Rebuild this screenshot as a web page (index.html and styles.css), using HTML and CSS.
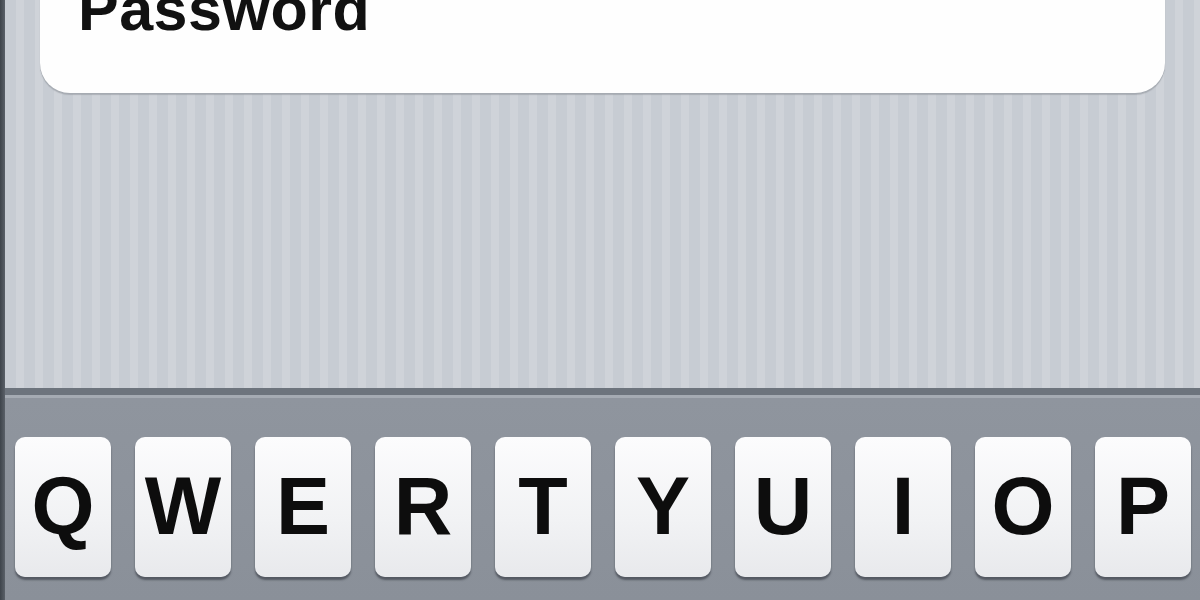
FILE: index.html
```html
<!DOCTYPE html>
<html>
<head>
<meta charset="utf-8">
<link rel="stylesheet" href="styles.css">
</head>
<body>
<div class="screen">
  <div class="edge"></div>
  <div class="main">
    <div class="pane">
      <div class="card">
        <div class="field">Password</div>
      </div>
    </div>
    <div class="keyboard">
      <div class="row">
        <div class="key">Q</div>
        <div class="key">W</div>
        <div class="key">E</div>
        <div class="key">R</div>
        <div class="key">T</div>
        <div class="key">Y</div>
        <div class="key">U</div>
        <div class="key">I</div>
        <div class="key">O</div>
        <div class="key">P</div>
      </div>
    </div>
  </div>
</div>
</body>
</html>
```
FILE: styles.css
```css
html, body {
  margin: 0;
  padding: 0;
  width: 1200px;
  height: 600px;
  overflow: hidden;
  font-family: "Liberation Sans", Arial, sans-serif;
}
.screen {
  display: flex;
  width: 1200px;
  height: 600px;
}
.edge {
  width: 5px;
  background: linear-gradient(90deg, #3e444b, #5a6068);
  flex: none;
}
.main {
  flex: 1;
  display: flex;
  flex-direction: column;
}
.pane {
  height: 388px;
  flex: none;
  background-color: #c9ced5;
  background-image: repeating-linear-gradient(90deg,
    #c7ccd3 0px, #c7ccd3 11px, #cfd3d9 11px, #cfd3d9 19px);
  overflow: hidden;
}
.card {
  margin: -60px 0 0 35px;
  width: 1125px;
  height: 153px;
  background: #fefefe;
  border-radius: 30px;
  box-shadow: 0 1px 0 #a6abb2, 0 2px 1px rgba(150,155,162,0.6);
  box-sizing: border-box;
  padding: 39px 0 0 38px;
}
.field {
  font-size: 61px;
  font-weight: bold;
  line-height: 61px;
  color: #111;
  letter-spacing: 0.5px;
}
.keyboard {
  flex: 1;
  background: linear-gradient(180deg, #6d747d 0px, #6d747d 7px, #a5abb3 7px, #a5abb3 10px, #8f959e 10px, #8a9099 100%);
  padding-top: 49px;
  box-sizing: border-box;
}
.row {
  display: flex;
  gap: 24px;
  padding-left: 10px;
}
.key {
  width: 96px;
  height: 140px;
  flex: none;
  border-radius: 10px;
  background: linear-gradient(180deg, #fcfcfd 0%, #f1f2f4 60%, #e8e9ec 100%);
  box-shadow: 0 3px 2px rgba(40,44,52,0.55);
  display: flex;
  align-items: center;
  justify-content: center;
  font-size: 81px;
  font-weight: bold;
  color: #0d0d0d;
  padding-bottom: 2px;
  box-sizing: border-box;
}
```
